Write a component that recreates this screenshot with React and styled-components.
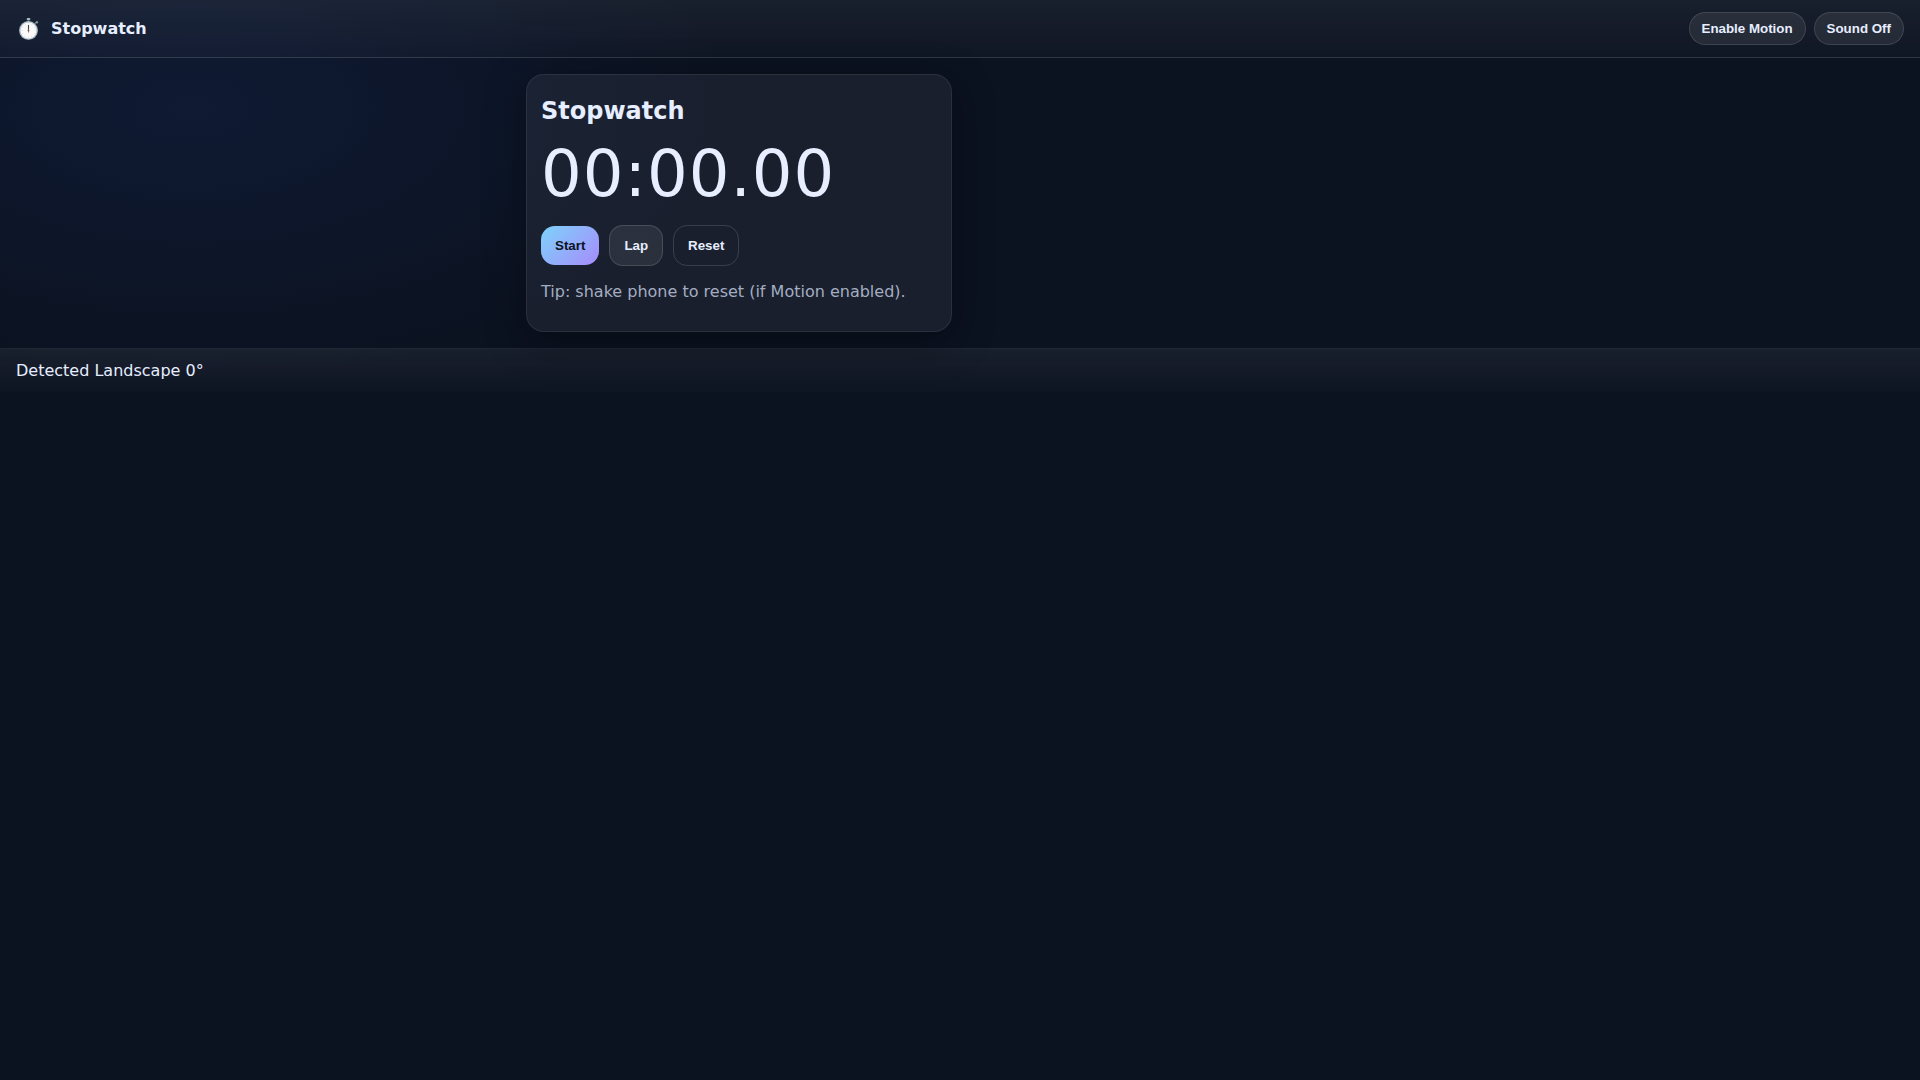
import React, { useEffect, useRef, useState } from 'react';
import styled, { createGlobalStyle } from 'styled-components';

const pad = n => String(n).padStart(2, '0');

const format = ms => {
   const cs = Math.floor(ms / 10);
   return `${pad(Math.floor(cs / 6000))}:${pad(Math.floor(cs / 100) % 60)}.${pad(cs % 100)}`;
};

const WatchIcon = () => (
   <svg width="24" height="24" viewBox="-0.5 0 24 24" aria-hidden="true">
      <rect x="10.2" y="1" width="3.6" height="2" rx="0.8" fill="#a9b8c0" />
      <rect x="11" y="3" width="2" height="2" fill="#5f7580" />
      <path d="M18.4 6.8l1.6-1.6" stroke="#5f7580" strokeWidth="1.4" />
      <circle cx="20.4" cy="5.2" r="1.2" fill="#82949d" />
      <circle cx="12" cy="13.5" r="9.5" fill="#82949d" />
      <circle cx="12" cy="13.3" r="9" fill="#b5c4cb" />
      <circle cx="12" cy="13.5" r="8" fill="#fafafa" />
      <circle
         cx="12"
         cy="13.5"
         r="6.6"
         fill="none"
         stroke="#cfc4c1"
         strokeWidth="0.9"
         strokeDasharray="0.8 2.656"
         strokeDashoffset="0.4"
      />
      <path d="M12 8v5.5" stroke="#454545" strokeWidth="1.1" />
      <path d="M12 12.5v3.2" stroke="#d9694f" strokeWidth="0.8" />
      <circle cx="12" cy="13.6" r="0.9" fill="#6b5148" />
   </svg>
);

const App = () => {
   const [running, setRunning] = useState(false);
   const [elapsed, setElapsed] = useState(0);
   const [laps, setLaps] = useState([]);
   const [sound, setSound] = useState(false);
   const [motion, setMotion] = useState(false);
   const base = useRef(0);

   useEffect(() => {
      if (!running) return;
      const start = performance.now() - base.current;
      const timer = setInterval(() => {
         base.current = performance.now() - start;
         setElapsed(base.current);
      }, 31);

      return () => clearInterval(timer);
   }, [running]);

   const reset = () => {
      base.current = 0;
      setRunning(false);
      setElapsed(0);
      setLaps([]);
   };

   return (
      <>
         <GlobalStyle />
         <Header>
            <Brand>
               <WatchIcon />
               <strong>Stopwatch</strong>
            </Brand>
            <Actions>
               <Pill onClick={() => setMotion(!motion)}>
                  {motion ? 'Motion Enabled' : 'Enable Motion'}
               </Pill>
               <Pill onClick={() => setSound(!sound)}>
                  {sound ? 'Sound On' : 'Sound Off'}
               </Pill>
            </Actions>
         </Header>

         <Main>
            <Card>
               <Title>Stopwatch</Title>
               <Time>{format(elapsed)}</Time>
               <Controls>
                  <Button $variant="primary" onClick={() => setRunning(!running)}>
                     {running ? 'Pause' : 'Start'}
                  </Button>
                  <Button
                     $variant="soft"
                     onClick={() => running && setLaps([...laps, elapsed])}
                  >
                     Lap
                  </Button>
                  <Button onClick={reset}>Reset</Button>
               </Controls>
               {laps.length > 0 && (
                  <ol>
                     {laps.map((lap, id) => (
                        <li key={id}>{format(lap)}</li>
                     ))}
                  </ol>
               )}
               <Tip>Tip: shake phone to reset (if Motion enabled).</Tip>
            </Card>
         </Main>

         <Footer>Detected Landscape 0°</Footer>
      </>
   );
};

export default App;

const GlobalStyle = createGlobalStyle`
   * {
      box-sizing: border-box;
   }

   body {
      margin: 0;
      min-height: 100vh;
      color: #e6eeff;
      font-family: 'DejaVu Sans', sans-serif;
      background: radial-gradient(900px 450px at 10% 10%, #0f1a33, transparent 60%), #0b1220;
   }
`;

const Header = styled.header`
   display: flex;
   align-items: center;
   justify-content: space-between;
   padding: 12px 16px;
   border-bottom: 1px solid rgba(255, 255, 255, 0.1);
   background: linear-gradient(rgba(255, 255, 255, 0.06), rgba(255, 255, 255, 0.02));
`;

const Brand = styled.div`
   display: flex;
   align-items: center;
   gap: 11px;
`;

const Actions = styled.div`
   display: flex;
   gap: 8px;
`;

const Pill = styled.button`
   padding: 8px 12px;
   border: 1px solid rgba(255, 255, 255, 0.12);
   border-radius: 999px;
   color: #e6eeff;
   font-family: 'Liberation Sans', sans-serif;
   font-weight: 600;
   background: rgba(255, 255, 255, 0.08);
   cursor: pointer;
`;

const Main = styled.main`
   display: grid;
   grid-template-columns: repeat(2, 1fr);
   gap: 16px;
   max-width: 900px;
   margin: 0 auto;
   padding: 16px;
`;

const Card = styled.section`
   padding: 14px;
   border: 1px solid rgba(255, 255, 255, 0.08);
   border-radius: 18px;
   background: rgba(255, 255, 255, 0.06);
   box-shadow: 0 10px 40px rgba(0, 0, 0, 0.35);
`;

const Title = styled.h2`
   margin: 8px 0 12px;
   font-size: 24px;
`;

const Time = styled.div`
   font-size: 64px;
   letter-spacing: 1px;
   font-variant-numeric: tabular-nums;
`;

const Controls = styled.div`
   display: flex;
   align-items: center;
   gap: 10px;
   margin-top: 14px;
`;

const Button = styled.button`
   padding: 12px 14px;
   border: ${({ $variant }) =>
      $variant === 'primary' ? '0' : '1px solid rgba(255, 255, 255, 0.14)'};
   border-radius: 14px;
   color: ${({ $variant }) => ($variant === 'primary' ? '#0b1220' : '#e6eeff')};
   font-family: 'Liberation Sans', sans-serif;
   font-weight: 700;
   background: ${({ $variant }) =>
      $variant === 'primary'
         ? 'linear-gradient(135deg, #7dd3fc, #a78bfa)'
         : $variant === 'soft'
           ? 'rgba(255, 255, 255, 0.08)'
           : 'transparent'};
   cursor: pointer;
`;

const Tip = styled.p`
   margin: 16px 0;
   color: #a3adc2;
`;

const Footer = styled.footer`
   padding: 12px 16px;
   border-top: 1px solid rgba(255, 255, 255, 0.08);
   background: linear-gradient(rgba(255, 255, 255, 0.06), rgba(255, 255, 255, 0.01));
`;
